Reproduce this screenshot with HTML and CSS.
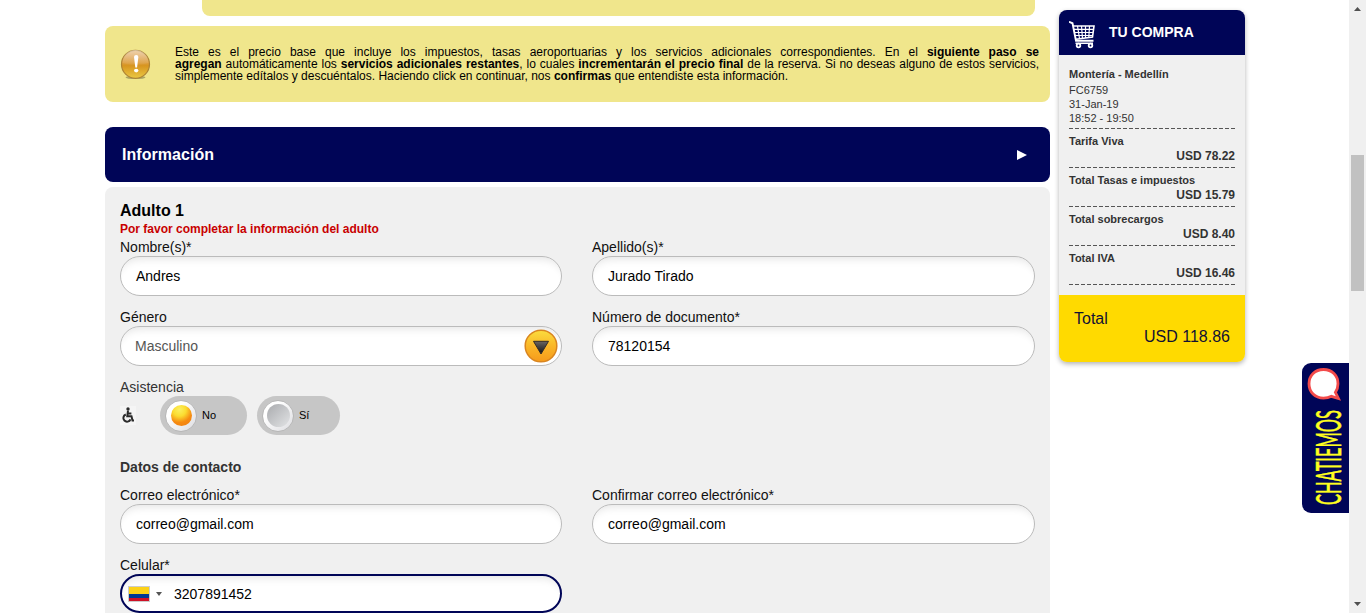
FILE: index.html
```html
<!DOCTYPE html>
<html lang="es">
<head>
<meta charset="utf-8">
<title>Información de pasajeros</title>
<link rel="stylesheet" href="styles.css">
</head>
<body>
<div class="page">
  <main class="main">
    <div class="banner-end"></div>
    <section class="notice">
      <svg class="notice-icon" width="31" height="31" viewBox="0 0 31 31">
        <defs>
          <linearGradient id="warn" x1="0" y1="0" x2="0" y2="1"><stop offset="0" stop-color="#dfa65c"/><stop offset=".45" stop-color="#dc9d3c"/><stop offset=".55" stop-color="#d7951f"/><stop offset="1" stop-color="#eac944"/></linearGradient>
          <linearGradient id="shine" x1="0" y1="0" x2="0" y2="1"><stop offset="0" stop-color="#fff" stop-opacity=".5"/><stop offset="1" stop-color="#fff" stop-opacity=".02"/></linearGradient>
        </defs>
        <ellipse cx="15.5" cy="28.5" rx="10" ry="1.6" fill="#8f8a52" opacity=".7"/>
        <circle cx="15.5" cy="15.3" r="14" fill="url(#warn)" stroke="#ad8336" stroke-width="1.2"/>
        <path d="M2.5 14a13 13 0 0 1 26 0q-7 2-13 2t-13-2z" fill="url(#shine)"/>
        <path d="M14 8q0-2 2.200-2t2.200 2l-1.300 10.500h-1.800z" fill="#fff"/>
        <ellipse cx="16.200" cy="21.600" rx="2.200" ry="1.800" fill="#fff"/>
      </svg>
      <p class="notice-text"><span class="line">Este es el precio base que incluye los impuestos, tasas aeroportuarias y los servicios adicionales correspondientes. En el <b>siguiente paso se</b></span> <span class="line"><b>agregan</b> automáticamente los <b>servicios adicionales restantes</b>, lo cuales <b>incrementarán el precio final</b> de la reserva. Si no deseas alguno de estos servicios,</span> simplemente edítalos y descuéntalos. Haciendo click en continuar, nos <b>confirmas</b> que entendiste esta información.</p>
    </section>
    <header class="section-bar">
      <h2 class="section-title">Información</h2>
      <svg width="10" height="10" viewBox="0 0 10 10"><path d="M0 0L10 5 0 10z" fill="#fff"/></svg>
    </header>
    <section class="form">
      <h3 class="adult">Adulto 1</h3>
      <p class="error">Por favor completar la información del adulto</p>
      <div class="row">
        <div class="field"><label class="label">Nombre(s)*</label><div class="input">Andres</div></div>
        <div class="field"><label class="label">Apellido(s)*</label><div class="input">Jurado Tirado</div></div>
      </div>
      <div class="row">
        <div class="field"><label class="label">Género</label>
          <div class="input select"><span>Masculino</span>
            <svg width="34" height="34" viewBox="0 0 34 34">
              <defs><linearGradient id="gold" x1="0" y1="0" x2="0" y2="1"><stop offset="0" stop-color="#fbdd3e"/><stop offset=".5" stop-color="#fab728"/><stop offset="1" stop-color="#f59a1b"/></linearGradient>
              <linearGradient id="dark" x1="0" y1="0" x2="0" y2="1"><stop offset="0" stop-color="#6b6662"/><stop offset="1" stop-color="#0c1014"/></linearGradient></defs>
              <circle cx="17" cy="17" r="15.800" fill="url(#gold)" stroke="#d98520" stroke-width="1.500"/>
              <path d="M9.500 12.300h15L17 25z" fill="url(#dark)" stroke="#332b25" stroke-width="1"/>
            </svg>
          </div>
        </div>
        <div class="field"><label class="label">Número de documento*</label><div class="input">78120154</div></div>
      </div>
      <div class="assist">
        <label class="label soft">Asistencia</label>
        <div class="toggles">
          <span class="chair"><svg width="16" height="18" viewBox="0 0 16 18" fill="none" stroke="#2b2b2b">
            <circle cx="8" cy="2.900" r="1.700" fill="#2b2b2b" stroke="none"/>
            <path d="M8 4.500L7.300 10.300h4.200l1 4.200h1.500M7.800 7.600h3.600" stroke-width="2"/>
            <path d="M5.800 8.500a3.700 3.700 0 1 0 4.700 4.800" stroke-width="2"/>
          </svg></span>
          <div class="toggle on"><span class="knob"><i class="bulb"></i></span><span class="choice">No</span></div>
          <div class="toggle off"><span class="knob"><i class="bulb"></i></span><span class="choice">Sí</span></div>
        </div>
      </div>
      <h4 class="contact">Datos de contacto</h4>
      <div class="row">
        <div class="field"><label class="label">Correo electrónico*</label><div class="input">correo@gmail.com</div></div>
        <div class="field"><label class="label">Confirmar correo electrónico*</label><div class="input">correo@gmail.com</div></div>
      </div>
      <div class="row last">
        <div class="field"><label class="label">Celular*</label>
          <div class="input phone"><span class="flag"></span><span class="caret"></span><span>3207891452</span></div>
        </div>
      </div>
    </section>
  </main>
  <aside class="cart">
    <header class="cart-head">
      <svg width="28" height="28" viewBox="0 0 28 28" fill="none" stroke="#fff">
        <path d="M0 .8l3.500 1.500 3.500 17.500h17.500" stroke-width="1.900"/>
        <path d="M4 5H25l-1.500 11-16.500 2.200" stroke-width="1.600"/>
        <path d="M5 8.300h19.500M5.500 11.500h18.500M6 14.500h17.500M8.500 5l2 12.500M12.500 5l1 12.500M16.500 5v12M20.500 5l-.7 11.500" stroke-width="1.200"/>
        <path d="M6.500 22.200h17.500" stroke-width="1.600"/>
        <circle cx="9.500" cy="24.500" r="1.800" stroke-width="1.800"/><circle cx="21.500" cy="24.500" r="1.800" stroke-width="1.800"/>
      </svg>
      <h2 class="cart-title">TU COMPRA</h2>
    </header>
    <div class="cart-body">
      <div class="flight"><b>Montería - Medellín</b><span>FC6759</span><span>31-Jan-19</span><span>18:52 - 19:50</span></div>
      <div class="item"><b>Tarifa Viva</b><b class="price">USD 78.22</b></div>
      <div class="item"><b>Total Tasas e impuestos</b><b class="price">USD 15.79</b></div>
      <div class="item"><b>Total sobrecargos</b><b class="price">USD 8.40</b></div>
      <div class="item"><b>Total IVA</b><b class="price">USD 16.46</b></div>
    </div>
    <div class="total"><span>Total</span><span class="sum">USD 118.86</span></div>
  </aside>
  <div class="scrollbar">
    <svg width="7" height="4" viewBox="0 0 7 4"><path d="M3.500 0L7 4H0z" fill="#505050"/></svg>
    <span class="thumb"></span>
    <svg class="down" width="7" height="4" viewBox="0 0 7 4"><path d="M0 0h7L3.500 4z" fill="#505050"/></svg>
  </div>
</div>
<div class="chat">
  <svg width="47" height="150" viewBox="0 0 47 150">
    <path d="M21.500 6.500c8.500 0 14.500 6 14.500 14.300 0 3.500-1 6.300-2.600 8.600l3 6.100-7-2.200c-2.300 1.200-4.900 1.800-7.900 1.800-8.500 0-14.500-6-14.500-14.300S13 6.500 21.500 6.500z" fill="#fff" stroke="#f34b4b" stroke-width="2.800"/>
    <text class="chat-text" transform="translate(39 142) rotate(-90)" textLength="95" lengthAdjust="spacingAndGlyphs">CHATIEMOS</text>
  </svg>
</div>
</body>
</html>
```

FILE: styles.css
```css
* { box-sizing: border-box; }
body { margin: 0; height: 613px; overflow: hidden; background: #fff; font-family: "Liberation Sans", Arial, sans-serif; color: #111; }
h2, h3, h4, p { margin: 0; }
.page { display: flex; height: 613px; padding-left: 105px; }
.main { width: 945px; flex: none; display: flex; flex-direction: column; }
.banner-end { flex: none; height: 16px; margin: 0 15px 10px 97px; background: #f0e68c; border-radius: 0 0 8px 8px; }
.notice { flex: none; height: 76px; margin-bottom: 25px; padding: 20px 11px 0 15px; display: flex; background: #f0e68c; border-radius: 8px; }
.notice-icon { flex: none; margin: 3px 24px 0 0; }
.notice-text { flex: 1; font-size: 12px; line-height: 12px; color: #000; }
.line { display: block; text-align: justify; text-align-last: justify; white-space: normal; }
.section-bar { flex: none; height: 55px; margin-bottom: 5px; padding: 0 23px 0 17px; display: flex; align-items: center; justify-content: space-between; background: #000557; border-radius: 8px; color: #fff; }
.section-title { font-size: 16px; letter-spacing: .05px; }
.form { flex: 1 1 0; min-height: 0; padding: 14px 15px 0; background: #f0f0f0; border-radius: 8px 8px 0 0; }
.adult { height: 20px; font-size: 16px; line-height: 19px; color: #000; }
.error { height: 17px; font-size: 12px; line-height: 16px; font-weight: bold; color: #c80000; }
.row { display: grid; grid-template-columns: 442px 443px; column-gap: 30px; margin-bottom: 12px; }
.last { margin-bottom: 0; }
.label { display: block; height: 18px; font-size: 14px; line-height: 18px; white-space: nowrap; }
.soft { color: #333; }
.input { height: 40px; padding: 0 15px; display: flex; align-items: center; font-size: 14px; color: #000; border: 1px solid #bbb; border-radius: 20px; background: #fff; box-shadow: inset 0 10px 9px -8px #e4e4e4; }
.select { padding: 0 3px 0 14px; justify-content: space-between; color: #555; }
.assist { height: 78px; }
.toggles { display: flex; height: 39px; }
.chair { width: 16px; height: 19px; margin: 10px 24px 0 0; background: #f5f5f5; }
.toggle { height: 39px; display: flex; align-items: center; padding-left: 5px; border-radius: 20px; background: #c6c6c6; font-size: 11px; color: #000; }
.choice { padding-bottom: 2px; }
.on { width: 87px; margin-right: 10px; }
.off { width: 83px; }
.knob { width: 32px; height: 32px; margin-right: 5px; display: flex; align-items: center; justify-content: center; border-radius: 50%; background: linear-gradient(135deg, #fff 30%, #dcdce0); border: 1px solid #b7b7b7; }
.bulb { width: 21px; height: 21px; border-radius: 50%; background: radial-gradient(circle at 40% 22%, #fbf060 0, #fbdc30 32%, #f68b12 62%, #ee7c10 100%); }
.off .bulb { width: 23px; height: 23px; background: linear-gradient(135deg, #a9abae, #e2e3e5); }
.contact { height: 30px; font-size: 14px; line-height: 22px; color: #333; }
.phone { height: 39px; padding: 0 6px; border: 2px solid #000557; }
.flag { width: 22px; height: 16px; margin-right: 6px; border: 1px solid #ccc; background: linear-gradient(#fcd116 50%, #003893 50% 75%, #ce1126 75%); }
.caret { margin-right: 12px; border: 3px solid transparent; border-top: 4px solid #555; border-bottom: 0; }
.cart { flex: none; width: 186px; height: 352px; margin: 10px 0 0 9px; border-radius: 8px; overflow: hidden; background: #f0f0f0; box-shadow: 0 2px 5px #0000004d; color: #333; }
.cart-head { height: 45px; padding-left: 10px; display: flex; align-items: center; gap: 12px; background: #000557; color: #fff; }
.cart-head svg { margin-top: 4px; }
.cart-title { padding-bottom: 2px; font-size: 14px; }
.cart-body { height: 240px; padding: 11px 10px 0; font-size: 11px; }
.flight { height: 63px; display: flex; flex-direction: column; line-height: 14px; }
.flight b { height: 17px; line-height: 16px; }
.flight, .item { background: repeating-linear-gradient(90deg, #555 0 4px, transparent 4px 6px) left bottom / 100% 1px no-repeat; }
.item { height: 39px; padding-top: 5px; display: flex; flex-direction: column; line-height: 15px; }
.price { align-self: flex-end; font-size: 12px; line-height: 14px; }
.total { height: 67px; padding: 15px 15px 0; display: flex; flex-direction: column; background: #ffda00; color: #111133; font-size: 16px; line-height: 18px; }
.sum { align-self: flex-end; }
.scrollbar { width: 17px; height: 613px; margin-left: auto; padding-top: 7px; display: flex; flex-direction: column; align-items: center; background: #f0f0f0; }
.thumb { width: 13px; height: 136px; margin-top: 144px; background: #c1c1c1; }
.down { margin-top: auto; margin-bottom: 7px; }
.chat { position: absolute; right: 17px; top: 363px; width: 47px; height: 150px; background: #000557; border-radius: 9px 0 0 9px; }
.chat svg { display: block; }
.chat-text { font-family: Lato, "Liberation Sans", sans-serif; font-size: 35px; fill: #ffff1e; stroke: #ffff1e; stroke-width: .5px; }
```
